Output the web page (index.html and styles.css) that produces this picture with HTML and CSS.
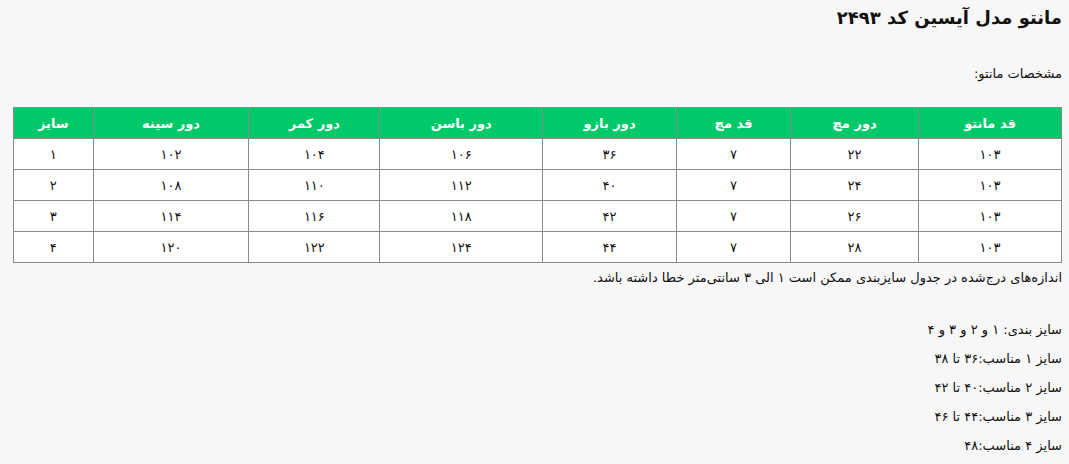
FILE: index.html
```html
<!DOCTYPE html>
<html lang="fa" dir="rtl">
<head>
<meta charset="utf-8">
<link rel="stylesheet" href="styles.css">
</head>
<body>
<div class="page">
  <h1 class="title">مانتو مدل آیسین کد ۲۴۹۳</h1>
  <p class="lead">مشخصات مانتو:</p>
  <table class="sizes">
    <thead>
      <tr>
        <th class="c1">قد مانتو</th>
        <th class="c2">دور مچ</th>
        <th class="c3">قد مچ</th>
        <th class="c4">دور بازو</th>
        <th class="c5">دور باسن</th>
        <th class="c6">دور کمر</th>
        <th class="c7">دور سینه</th>
        <th class="c8">سایز</th>
      </tr>
    </thead>
    <tbody>
      <tr><td>۱۰۳</td><td>۲۲</td><td>۷</td><td>۳۶</td><td>۱۰۶</td><td>۱۰۴</td><td>۱۰۲</td><td>۱</td></tr>
      <tr><td>۱۰۳</td><td>۲۴</td><td>۷</td><td>۴۰</td><td>۱۱۲</td><td>۱۱۰</td><td>۱۰۸</td><td>۲</td></tr>
      <tr><td>۱۰۳</td><td>۲۶</td><td>۷</td><td>۴۲</td><td>۱۱۸</td><td>۱۱۶</td><td>۱۱۴</td><td>۳</td></tr>
      <tr><td>۱۰۳</td><td>۲۸</td><td>۷</td><td>۴۴</td><td>۱۲۴</td><td>۱۲۲</td><td>۱۲۰</td><td>۴</td></tr>
    </tbody>
  </table>
  <p class="note">اندازه‌های درج‌شده در جدول سایزبندی ممکن است ۱ الی ۳ سانتی‌متر خطا داشته باشد.</p>
  <div class="fits">
    <p>سایز بندی: ۱ و ۲ و ۳ و ۴</p>
    <p>سایز ۱ مناسب:۳۶ تا ۳۸</p>
    <p>سایز ۲ مناسب:۴۰ تا ۴۲</p>
    <p>سایز ۳ مناسب:۴۴ تا ۴۶</p>
    <p>سایز ۴ مناسب:۴۸</p>
  </div>
</div>
</body>
</html>
```

FILE: styles.css
```css
html, body {
  margin: 0;
  padding: 0;
  background: #f7f7f7;
}
body {
  font-family: "DejaVu Sans", "Noto Sans", sans-serif;
  color: #111;
  font-size: 13px;
}
.page {
  padding: 4px 7px 0 13px;
}
.title {
  margin: 0;
  font-size: 18px;
  font-weight: bold;
  line-height: 28px;
}
.lead {
  margin: 32px 0 0;
  line-height: 20px;
}
.sizes {
  margin-top: 23px;
  width: 100%;
  border-collapse: collapse;
  background: #fff;
  border: 1px solid #8a8a8a;
}
.sizes th {
  background: #00c96a;
  color: #fff;
  font-weight: bold;
  height: 30px;
  padding: 0;
  font-size: 13px;
  border-left: 1px solid #8a8a8a;
  border-right: 1px solid #8a8a8a;
}
.sizes td {
  height: 30px;
  padding: 0;
  text-align: center;
  border: 1px solid #8a8a8a;
  font-size: 13px;
}
.c1 { width: 143px; }
.c2 { width: 128px; }
.c3 { width: 114px; }
.c4 { width: 134px; }
.c5 { width: 163px; }
.c6 { width: 131px; }
.c7 { width: 156px; }
.c8 { width: 79px; }
.note {
  margin: 4px 0 0;
  line-height: 22px;
}
.fits {
  margin-top: 26px;
}
.fits p {
  margin: 0;
  line-height: 29px;
}
```
